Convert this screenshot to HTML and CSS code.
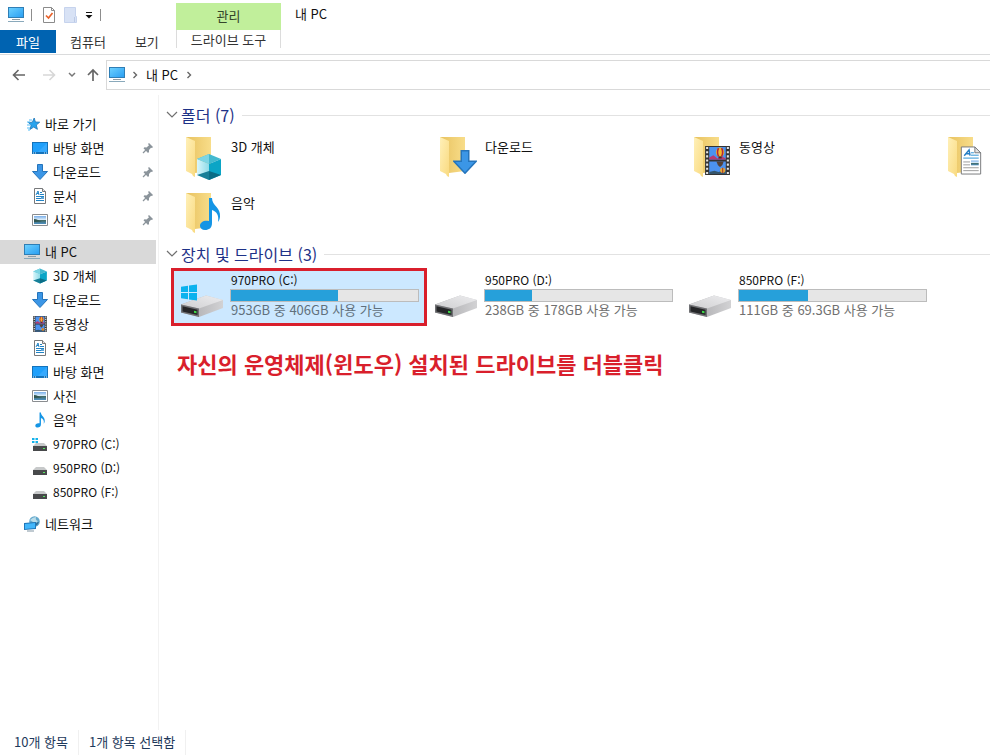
FILE: index.html
```html
<!DOCTYPE html>
<html lang="ko">
<head>
<meta charset="utf-8">
<meta name="viewport" content="width=device-width, initial-scale=1">
<title>내 PC</title>
<link rel="stylesheet" href="styles.css">
</head>
<body>
<svg class="defs" width="0" height="0" aria-hidden="true">
  <defs>
    <linearGradient id="g-screen" x1="0" y1="0" x2="1" y2="1"><stop offset="0" stop-color="#6bd0ff"/><stop offset="1" stop-color="#2b9ff2"/></linearGradient>
    <linearGradient id="g-fold" x1="0" y1="0" x2="1" y2="0"><stop offset="0" stop-color="#e8c25f"/><stop offset="1" stop-color="#f8dd8a"/></linearGradient>
    <linearGradient id="g-flap" x1="0" y1="0" x2="1" y2="1"><stop offset="0" stop-color="#fff0b8"/><stop offset="1" stop-color="#f9da80"/></linearGradient>
    <linearGradient id="g-top" x1="0" y1="1" x2="1" y2="0"><stop offset="0" stop-color="#cfcfd1"/><stop offset="1" stop-color="#ececee"/></linearGradient>
    <linearGradient id="g-side" x1="0" y1="0" x2="1" y2="0"><stop offset="0" stop-color="#a5a5a8"/><stop offset="1" stop-color="#d2d2d4"/></linearGradient>
    <linearGradient id="g-cube" x1="0" y1="0" x2="1" y2="0"><stop offset="0" stop-color="#d9f6fb"/><stop offset="1" stop-color="#8fdbe8"/></linearGradient>
    <linearGradient id="g-photo" x1="0" y1="0" x2="0" y2="1"><stop offset="0" stop-color="#78aeea"/><stop offset=".5" stop-color="#e5f3fb"/><stop offset=".55" stop-color="#446b65"/><stop offset="1" stop-color="#4c90c4"/></linearGradient>
  </defs>
  <symbol id="pc" viewBox="0 0 16 16">
    <path d="M0 0h16v11H0z" fill="#2f7eb5"/><path d="M1 1h14v9H1z" fill="url(#g-screen)"/>
    <path d="M4 12h8v1H4z" fill="#8e9ca5"/><path d="M0 14h16v1H0z" fill="#8aa9bb"/>
  </symbol>
  <symbol id="star" viewBox="0 0 16 16">
    <path d="M10.200 2l1.200 4 4.300.2-3.400 2.800 1.100 4.300-3.700-2.200L6 13.400l1.200-4.200-2.900-2.700 4.100-.3z" fill="#28a3ed" stroke="#1b73b8" stroke-width=".8"/>
    <path d="M5 4h3M3 6h3M3 9h4M3 12h3M4 14h2" stroke="#54bdf7" stroke-width="1.100"/>
  </symbol>
  <symbol id="desktop" viewBox="0 0 16 16">
    <path d="M0 2h16v12H0z" fill="#1473bb"/><path d="M1 3h14v9H1z" fill="#20a0fb"/><path d="M6 12l9-9v9z" fill="#36a9fd"/>
    <path d="M1 13h1M3 13h1M12 13h1M14 13h1" stroke="#d6efff"/>
  </symbol>
  <symbol id="down" viewBox="0 0 16 16">
    <path d="M5.500.5h5v7h5L8 15.500.5 7.500h5z" fill="#3b96e6" stroke="#2574bb"/>
  </symbol>
  <symbol id="doc" viewBox="0 0 16 16">
    <path d="M2.500.5h8l3 3v12h-11z" fill="#fff" stroke="#77797b"/><path d="M10.500.5v3h3" fill="#e6e6e6" stroke="#77797b"/>
    <path d="M4 7l2-4 1 4M5 5.500h2M8 4.500h2M8 6.500h4M4 8.500h8M4 10.500h8M4 12.500h8" fill="none" stroke="#2183c5"/>
    <path d="M9 9h3v2H9z" fill="#5ca5d8"/>
  </symbol>
  <symbol id="photo" viewBox="0 0 16 16">
    <path d="M.5 2.500h15v11H.5z" fill="#fff" stroke="#8a8d90"/><path d="M2 4h12v8H2z" fill="url(#g-photo)"/>
    <path d="M2 7c3 0 5 2 8 2.500L2 10z" fill="#315651"/>
  </symbol>
  <symbol id="cube" viewBox="0 0 28 28">
    <path d="M14 1l12 5-12 5L2 6z" fill="#43b9cf"/><path d="M2 6l12 5v16L2 22z" fill="url(#g-cube)"/>
    <path d="M14 11l12-5v16l-12 5z" fill="#0ba5c6"/><path d="M2 22l12-4v9z" fill="#167f98"/><path d="M14 18l12 4-12 5z" fill="#0a6d86"/>
    <path d="M14 1L2 6l12 5z" fill="#7dd5e4"/>
  </symbol>
  <symbol id="film" viewBox="0 0 24 28">
    <path d="M0 0h24v28H0z" fill="#343434"/>
    <path d="M2 1v27M22 1v27" stroke="#e6e6e6" stroke-width="2" stroke-dasharray="2 2"/>
    <path d="M4 1h16v12H4zM4 15h16v12H4z" fill="#4c92ef"/>
    <path d="M4 11l4-2 4 3 4-2 4 2v1H4z" fill="#b63b72"/><path d="M4 25l5-1 4 1 7-2v4H4z" fill="#35556d"/>
    <ellipse cx="14.500" cy="6" rx="4" ry="4.500" fill="#f3ba2b"/><path d="M13 2q-2 4 0 8M16 2q2 4 0 8" stroke="#b3263b" stroke-width="1.500" fill="none"/>
    <path d="M13 10h3v2h-3z" fill="#432e2a"/><path d="M11 15h7q-1 4-3 5h-1q-2-1-3-5z" fill="#564238"/>
    <circle cx="17" cy="23.500" r="2.500" fill="#e5a735"/><path d="M17 21v5" stroke="#a53732"/>
  </symbol>
  <symbol id="note" viewBox="0 0 22 34">
    <path d="M10 1h3c0 8 9 9 8 19-.3 2-1 4-2 5 1-7-1-10-6-12v13c0 5-3 7-7 7-3 0-5-2-5-4 0-4 4-6 9-5z" fill="#1595e5"/>
  </symbol>
  <symbol id="win" viewBox="0 0 16 16">
    <path d="M0 2.200L7 1.200V7.500H0zM8 1l8-1v7.500H8zM0 8.500h7v6.300L0 13.800zM8 8.500h8V16l-8-1z" fill="#0bb2ee"/>
  </symbol>
  <symbol id="drive" viewBox="0 0 44 24">
    <path d="M1 10.500L26 1.500 43 6v8L19 23 1 18.500z" fill="url(#g-side)"/>
    <path d="M1 10.500L26 1.500 43 6 19 14.500z" fill="url(#g-top)"/>
    <path d="M1 10.500l18 4V23L1 18.500z" fill="#707174"/><path d="M2.500 12.200l15 3.500v5.200l-15-3.500z" fill="#252628"/>
    <path d="M14 16.700l2.500.5v2l-2.500-.5z" fill="#3edc49"/>
  </symbol>
  <symbol id="smalldrive" viewBox="0 0 16 16">
    <path d="M4 7h8l3 3H1z" fill="#c7c9ca"/><path d="M1 10h14v5H1z" fill="#48494b"/><path d="M11 12h2v1h-2z" fill="#55ea60"/>
  </symbol>
  <symbol id="smalldrivewin" viewBox="0 0 16 16">
    <use href="#smalldrive"/><path d="M0 2h2.500v2H0zM3.500 2H6v2H3.500zM0 5h2.500v2H0zM3.500 5H6v2H3.500z" fill="#16b2ea"/>
  </symbol>
  <symbol id="network" viewBox="0 0 16 16">
    <circle cx="10.500" cy="5.500" r="5.300" fill="#63a8cc"/><path d="M6 4q3-3 6-3-1 3 2 4-2 3-5 1z" fill="#b9dce9"/><path d="M11 10q3-1 4-4-3 0-4 4z" fill="#2d6d98"/>
    <path d="M0 7l12-1v7L0 14z" fill="#1f77b9"/><path d="M1 8l10-1v5L1 13z" fill="#41b6fb"/><path d="M3 15h7" stroke="#8195a3"/>
  </symbol>
  <symbol id="pin" viewBox="0 0 12 12">
    <path d="M7 1l4 4-1 1-1-.3L7 8v2L6 11 1.500 6.200 2.500 5.300l2 .2L7 3.300 6 2z" fill="#8b949b"/><path d="M4 8L1 11" stroke="#8b949b" stroke-width="1.300"/>
  </symbol>
  <symbol id="folder" viewBox="0 0 38 44">
    <path d="M1 1h25v34l-16 2z" fill="url(#g-fold)"/><path d="M1 1l9 4v36l-2-1-1-2-6-3z" fill="url(#g-flap)"/>
  </symbol>
  <symbol id="bigdoc" viewBox="0 0 22 30">
    <path d="M1 1h14l6 6v22H1z" fill="#fff" stroke="#77797b"/><path d="M15 1v6h6z" fill="#e2e2e2" stroke="#77797b"/>
    <path d="M4 10l5-6 1 6M6 8h4" fill="none" stroke="#247dc4" stroke-width="1.500"/><path d="M11 7h3M11 9.500h8M3 12.500h16" stroke="#2a91d2"/>
    <path d="M3 16.500h7M3 19.500h7M3 22.500h16M3 25.500h16" stroke="#999"/><path d="M11 15h8v5h-8z" fill="url(#g-photo)"/>
  </symbol>
  <symbol id="next" viewBox="0 0 6 8"><path d="M1.500 1L4.500 4l-3 3" fill="none" stroke="#666" stroke-width="1.400"/></symbol>
  <symbol id="chev" viewBox="0 0 12 8"><path d="M1 1l5 5 5-5" fill="none" stroke="#707070" stroke-width="1.200"/></symbol>
</svg>

<header class="ribbon">
  <div class="quick">
    <svg class="i16"><use href="#pc"/></svg>
    <span class="divider"></span>
    <button class="plain" aria-label="속성"><svg width="14" height="16" viewBox="0 0 14 16"><path d="M1.500.5h8l3 3v12h-11z" fill="#fff" stroke="#8b8b8b"/><path d="M9.500.5v3h3" fill="none" stroke="#8b8b8b"/><path d="M4 8.500L6.500 11l4-5" fill="none" stroke="#e9622b" stroke-width="1.700"/></svg></button>
    <button class="plain" aria-label="새 폴더"><svg width="14" height="16" viewBox="0 0 14 16"><path d="M.5.5h11v9h1v6H.5z" fill="#d8e2f5" stroke="#c6d3ed"/><path d="M10.500 10v5" stroke="#bccae5"/></svg></button>
    <button class="plain more" aria-label="사용자 지정"><svg width="8" height="8" viewBox="0 0 8 8"><path d="M1 1.500h6" stroke="#111"/><path d="M.5 4h7L4 7.500z" fill="#111"/></svg></button>
    <span class="divider"></span>
  </div>
  <div class="context">관리</div>
  <h1 class="title">내 PC</h1>
  <nav class="tabs">
    <button class="tab file">파일</button><button class="tab">컴퓨터</button><button class="tab">보기</button>
  </nav>
  <button class="tab tools">드라이브 도구</button>
</header>

<div class="navbar">
  <button class="plain nav" aria-label="뒤로"><svg width="14" height="12" viewBox="0 0 14 12"><path d="M13 6H2M6.500 1L1.500 6l5 5" fill="none" stroke="#666" stroke-width="1.600"/></svg></button>
  <button class="plain nav" aria-label="앞으로"><svg width="14" height="12" viewBox="0 0 14 12"><path d="M1 6h11M7.500 1l5 5-5 5" fill="none" stroke="#d7d7d7" stroke-width="1.600"/></svg></button>
  <button class="plain recent" aria-label="최근 위치"><svg width="8" height="6" viewBox="0 0 8 6"><path d="M1 1l3 3 3-3" fill="none" stroke="#777" stroke-width="1.500"/></svg></button>
  <button class="plain up" aria-label="위로"><svg width="12" height="14" viewBox="0 0 12 14"><path d="M6 13V2M1 7l5-5 5 5" fill="none" stroke="#666" stroke-width="1.700"/></svg></button>
  <div class="address">
    <svg class="i16"><use href="#pc"/></svg><svg class="next"><use href="#next"/></svg><a href="#pc-view">내 PC</a><svg class="next"><use href="#next"/></svg>
  </div>
</div>

<div class="body">
  <nav class="side">
    <ul>
      <li class="top"><a href="#"><svg class="i16"><use href="#star"/></svg>바로 가기</a></li>
      <li><a href="#"><svg class="i16"><use href="#desktop"/></svg>바탕 화면<svg class="pin"><use href="#pin"/></svg></a></li>
      <li><a href="#"><svg class="i16"><use href="#down"/></svg>다운로드<svg class="pin"><use href="#pin"/></svg></a></li>
      <li><a href="#"><svg class="i16"><use href="#doc"/></svg>문서<svg class="pin"><use href="#pin"/></svg></a></li>
      <li><a href="#"><svg class="i16"><use href="#photo"/></svg>사진<svg class="pin"><use href="#pin"/></svg></a></li>
    </ul>
    <ul>
      <li class="top current"><a href="#"><svg class="i16"><use href="#pc"/></svg>내 PC</a></li>
      <li><a href="#"><svg class="i16"><use href="#cube"/></svg>3D 개체</a></li>
      <li><a href="#"><svg class="i16"><use href="#down"/></svg>다운로드</a></li>
      <li><a href="#"><svg class="i16"><use href="#film"/></svg>동영상</a></li>
      <li><a href="#"><svg class="i16"><use href="#doc"/></svg>문서</a></li>
      <li><a href="#"><svg class="i16"><use href="#desktop"/></svg>바탕 화면</a></li>
      <li><a href="#"><svg class="i16"><use href="#photo"/></svg>사진</a></li>
      <li><a href="#"><svg class="i16"><use href="#note"/></svg>음악</a></li>
      <li class="latin"><a href="#"><svg class="i16"><use href="#smalldrivewin"/></svg>970PRO (C:)</a></li>
      <li class="latin"><a href="#"><svg class="i16"><use href="#smalldrive"/></svg>950PRO (D:)</a></li>
      <li class="latin"><a href="#"><svg class="i16"><use href="#smalldrive"/></svg>850PRO (F:)</a></li>
    </ul>
    <ul>
      <li class="top"><a href="#"><svg class="i16"><use href="#network"/></svg>네트워크</a></li>
    </ul>
  </nav>

  <main class="content" id="pc-view">
    <section>
      <h2><svg class="chev"><use href="#chev"/></svg>폴더 (7)</h2>
      <div class="grid">
        <div class="tile"><svg class="big" viewBox="0 0 38 44"><use href="#folder" width="38" height="44"/><use href="#cube" x="10" y="17" width="28" height="28"/></svg><span>3D 개체</span></div>
        <div class="tile"><svg class="big" viewBox="0 0 38 44"><use href="#folder" width="38" height="44"/><use href="#down" x="14" y="14" width="24" height="24"/></svg><span>다운로드</span></div>
        <div class="tile"><svg class="big" viewBox="0 0 38 44"><use href="#folder" width="38" height="44"/><use href="#film" x="12" y="10" width="25" height="29"/></svg><span>동영상</span></div>
        <div class="tile"><svg class="big" viewBox="0 0 38 44"><use href="#folder" width="38" height="44"/><use href="#bigdoc" x="13" y="10" width="22" height="29"/></svg></div>
        <div class="tile"><svg class="big" viewBox="0 0 38 44"><use href="#folder" width="38" height="44"/><use href="#note" x="14" y="5" width="22" height="34"/></svg><span>음악</span></div>
      </div>
    </section>
    <section>
      <h2 class="drives-title"><svg class="chev"><use href="#chev"/></svg>장치 및 드라이브 (3)</h2>
      <div class="grid">
        <div class="drive selected">
          <svg class="disk" viewBox="0 0 44 34"><use href="#drive" y="10" width="44" height="24"/><use href="#win" x="1" width="16" height="17"/></svg>
          <div class="info"><label for="c">970PRO (C:)</label><progress id="c" max="100" value="57"></progress><span>953GB 중 406GB 사용 가능</span></div>
        </div>
        <div class="drive">
          <svg class="disk" viewBox="0 0 44 34"><use href="#drive" y="10" width="44" height="24"/></svg>
          <div class="info"><label for="d">950PRO (D:)</label><progress id="d" max="100" value="25"></progress><span>238GB 중 178GB 사용 가능</span></div>
        </div>
        <div class="drive">
          <svg class="disk" viewBox="0 0 44 34"><use href="#drive" y="10" width="44" height="24"/></svg>
          <div class="info"><label for="f">850PRO (F:)</label><progress id="f" max="100" value="37"></progress><span>111GB 중 69.3GB 사용 가능</span></div>
        </div>
      </div>
    </section>
    <p class="notice">자신의 운영체제(윈도우) 설치된 드라이브를 더블클릭</p>
  </main>
</div>

<footer class="status"><span>10개 항목</span><span>1개 항목 선택함</span></footer>
</body>
</html>
```
FILE: styles.css
```css
* { box-sizing: border-box; }

body {
  margin: 0;
  min-height: 100vh;
  display: flex;
  flex-direction: column;
  overflow-x: hidden;
  background: #fff;
  color: #111;
  font: 13px/16px "Noto Sans CJK KR", sans-serif;
}

.defs { position: absolute; }
svg { display: block; flex: none; }
.i16 { width: 16px; height: 16px; }
button { font: inherit; color: inherit; border: 0; padding: 0; background: none; }
a { color: inherit; text-decoration: none; }
.plain { display: flex; align-items: center; justify-content: center; }

/* Title bar and ribbon tabs */
.ribbon {
  display: grid;
  grid-template-columns: 176px 105px 1fr;
  grid-template-rows: 30px 25px;
  border-bottom: 1px solid #dadbdc;
  height: 55px;
}
.quick { display: flex; align-items: center; gap: 8px; padding: 0 0 1px 8px; }
.divider { width: 1px; height: 12px; margin-left: -1px; background: #8d8d8d; }
.quick .divider + .plain { margin-left: 2px; }
.more { margin-left: -1px; }
.context {
  margin-top: 3px;
  padding-bottom: 1px;
  background: #c1ef9b;
  color: #34452a;
  display: flex;
  align-items: center;
  justify-content: center;
}
.title { margin: 0; padding-left: 14px; font-size: 13px; font-weight: 400; line-height: 28px; }
.tabs { display: flex; }
.tab { height: 23px; padding: 0 14px; color: #333; line-height: 20px; white-space: nowrap; }
.tab + .tab + .tab { padding: 0 15px; }
.file { width: 56px; background: #0063b1; color: #fff; }
.tools {
  height: 18px;
  padding: 2px 0 0;
  line-height: 16px;
  border: solid #dcdcdc;
  border-width: 0 1px;
}

/* Navigation row */
.navbar { display: flex; align-items: center; height: 40px; padding-left: 12px; }
.nav { width: 14px; margin-right: 16px; }
.recent { width: 8px; margin: 0 11px 0 -4px; }
.up { width: 12px; margin-right: 7px; }
.address {
  flex: 1;
  height: 30px;
  display: flex;
  align-items: center;
  gap: 8px;
  padding-left: 2px;
  border: 1px solid #d9d9d9;
  border-right: 0;
}
.next { width: 6px; height: 8px; }
.address .i16 + .next { margin-left: -1px; }

/* Main area */
.body { flex: 1; display: flex; min-width: 0; }
.side { width: 159px; padding: 17px 2px 0 0; border-right: 1px solid #f2f2f2; }
.side ul { list-style: none; margin: 0 0 8px; padding: 0; }
.side a {
  display: flex;
  align-items: center;
  gap: 5px;
  height: 24px;
  padding-left: 32px;
}
.side .top a { padding-left: 24px; }
.current { background: #d9d9d9; }
.latin { font-size: 12px; }
.pin { width: 12px; height: 12px; margin: 0 2px 0 auto; }

.content { flex: 1; min-width: 0; overflow: hidden; padding: 5px 0 0 7px; }
h2 {
  display: flex;
  align-items: center;
  gap: 3px;
  height: 30px;
  margin: 0;
  color: #1e3287;
  font-size: 16px;
  font-weight: 400;
}
h2::after { content: ""; flex: 1; height: 1px; margin-left: 4px; background: #e2e2e2; }
.chev { width: 12px; height: 8px; }
.drives-title { height: 24px; margin-bottom: 3px; }
.grid { display: grid; grid-template-columns: repeat(4, 254px); grid-auto-rows: 56px; margin-left: 6px; }
.tile { display: flex; gap: 8px; padding: 6px 0 0 13px; }
.tile span { padding-top: 3px; }
.big { width: 38px; height: 44px; }
.drive { display: flex; gap: 6px; padding: 3px 7px 0 8px; }
.disk { width: 44px; height: 34px; margin-top: 12px; }
.info { flex: 1; display: flex; flex-direction: column; }
.info label { font-size: 12px; padding-left: 1px; }
.info span { padding-left: 1px; color: #707070; white-space: nowrap; }
.selected { background: #cce8ff; outline: 3px solid #d91f2c; outline-offset: -2px; }
.selected .info span { color: #61707c; }
progress {
  appearance: none;
  display: block;
  width: 100%;
  height: 13px;
  margin: 1px 0 0;
  border: 1px solid #bcbcbc;
  background: #e6e6e6;
}
progress::-webkit-progress-bar { background: #e6e6e6; }
progress::-webkit-progress-value { background: #26a0da; }
.notice { margin: 23px 0 0 11px; color: #d91f2c; font-size: 22px; font-weight: 700; line-height: 30px; white-space: nowrap; }

/* Status bar */
.status { display: flex; height: 25px; padding-left: 14px; color: #1e395b; line-height: 24px; }
.status span { padding-right: 10px; margin-right: 10px; border-right: 1px solid #f0f0f0; }
```
